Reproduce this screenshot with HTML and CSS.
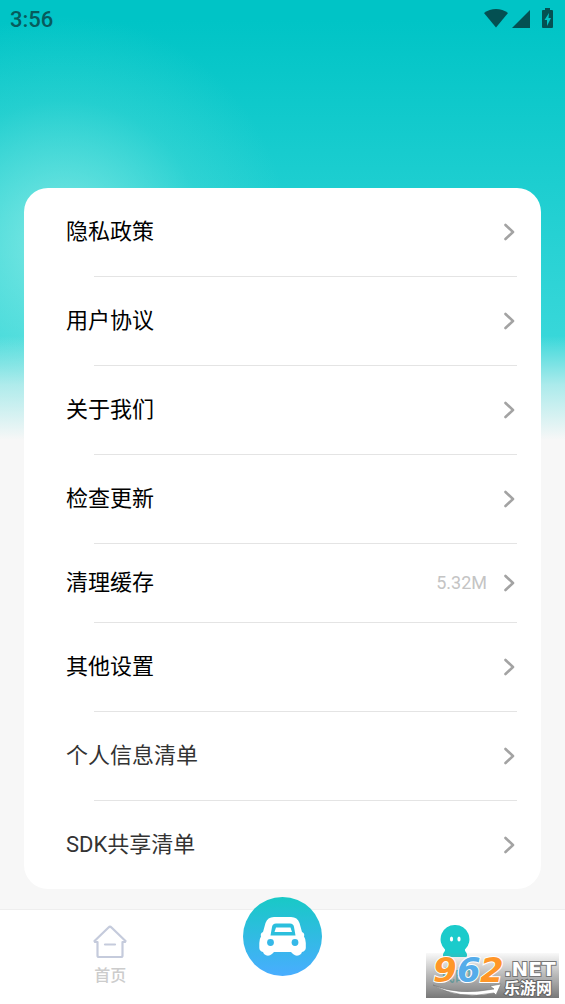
FILE: index.html
```
<!DOCTYPE html>
<html lang="zh-CN">
<head>
<meta charset="utf-8">
<meta name="viewport" content="width=device-width, initial-scale=1">
<title>我的</title>
<link rel="stylesheet" href="styles.css">
</head>
<body>
<svg class="sprite" aria-hidden="true">
  <symbol id="chevron" viewBox="0 0 12 18"><path d="M2.500 2L10 9L2.500 16" fill="none" stroke="currentColor" stroke-width="2.600" stroke-linecap="round" stroke-linejoin="round"/></symbol>
</svg>
<header class="status">
  <time class="clock">3:56</time>
  <svg class="status-icons" width="72" height="22" viewBox="0 0 72 22" aria-hidden="true">
    <path d="M1 6C8 0.500 18 0.500 25 6L13 20.500Z"/>
    <path d="M47 3V21H29Z"/>
    <path fill-rule="evenodd" d="M60 3h2V1h5v2h2q1 0 1 1v16q0 1-1 1h-9q-1 0-1-1V4q0-1 1-1ZM66 6L61.500 13H64v6L68 11h-2.500Z"/>
  </svg>
</header>
<main class="content">
  <div class="card">
    <button class="row"><span class="label">隐私政策</span><svg class="arrow"><use href="#chevron"/></svg></button>
    <button class="row"><span class="label">用户协议</span><svg class="arrow"><use href="#chevron"/></svg></button>
    <button class="row"><span class="label">关于我们</span><svg class="arrow"><use href="#chevron"/></svg></button>
    <button class="row"><span class="label">检查更新</span><svg class="arrow"><use href="#chevron"/></svg></button>
    <button class="row row-short"><span class="label">清理缓存</span><span class="value">5.32M</span><svg class="arrow"><use href="#chevron"/></svg></button>
    <button class="row"><span class="label">其他设置</span><svg class="arrow"><use href="#chevron"/></svg></button>
    <button class="row row-soft"><span class="label">个人信息清单</span><svg class="arrow"><use href="#chevron"/></svg></button>
    <button class="row row-soft"><span class="label">SDK共享清单</span><svg class="arrow"><use href="#chevron"/></svg></button>
  </div>
</main>
<nav class="tabs">
  <a class="tab" href="#home">
    <svg width="34" height="34" viewBox="0 0 34 34" fill="none" stroke="#c5cbdc" stroke-width="2.200" stroke-linecap="round" stroke-linejoin="round" aria-hidden="true">
      <path d="M4.500 17H2L1.500 16L15.500 2.500Q17 1 18.500 2.500L32.500 16L32 17H29.500V30.500Q29.500 32 28 32H6Q4.500 32 4.500 30.500Z"/><path d="M12 19.500H22"/>
    </svg>
    <span>首页</span>
  </a>
  <a class="tab tab-car" href="#car" aria-label="车辆">
    <svg width="79" height="79" viewBox="0 0 79 79" aria-hidden="true">
      <defs><linearGradient id="blue" x1="0" y1="0" x2="0" y2="1"><stop offset="0" stop-color="#18c9c6"/><stop offset="1" stop-color="#49adff"/></linearGradient></defs>
      <circle cx="39.500" cy="39.500" r="39.500" fill="url(#blue)"/>
      <path fill="#fff" d="M31 20H48Q54.500 20 56.500 26L59 35Q62 36 61 39.500Q62.800 42 62.800 46V51Q62.500 54 59 55L58 57Q54 60.500 50 57L48 55H31L29 57Q25 60.500 21 57L20 55Q16.500 54 16.300 51V46Q16.300 42 18 39.500Q17 36 20 35L22.500 26Q24.500 20 31 20Z"/>
      <path fill="#2bbfdd" fill-rule="evenodd" d="M33 26.500H47Q50.500 26.500 51 30L52.500 38.500H27.500L29 30Q29.500 26.500 33 26.500ZM33 30.500L31.500 35H49L47.500 30.500Z"/>
      <circle cx="27.500" cy="45.500" r="3.400" fill="#35b8e8"/><circle cx="52" cy="45.500" r="3.400" fill="#35b8e8"/>
    </svg>
  </a>
  <a class="tab tab-active" href="#mine">
    <svg width="34" height="34" viewBox="0 0 34 34" aria-hidden="true">
      <path fill="#1bcbcb" d="M17 0A14.200 14.200 0 0 1 27 24.500Q26.500 26 28.500 28Q30 32 27.500 32H6.500Q4 32 5.500 28Q7.500 26 7 24.500A14.200 14.200 0 0 1 17 0Z"/>
      <ellipse cx="13.500" cy="14" rx="1.600" ry="2.500" fill="#fff"/><ellipse cx="21" cy="14" rx="1.600" ry="2.500" fill="#fff"/>
    </svg>
    <span>我的</span>
  </a>
</nav>
<svg class="watermark" width="133" height="45" viewBox="0 0 133 45" role="img" aria-label="962.NET 乐游网">
  <defs>
    <linearGradient id="shade" x1="0" y1="0" x2="0" y2="1"><stop offset="0" stop-color="#888" stop-opacity="0.050"/><stop offset="0.500" stop-color="#888" stop-opacity="0.600"/><stop offset="1" stop-color="#777"/></linearGradient>
  </defs>
  <rect width="133" height="45" fill="url(#shade)"/>
  <path d="M7 32Q32 43 68 36L64 33L75 31L70 42L68 40Q32 47 7 32Z" fill="#fff" stroke="#777" stroke-width="0.600"/>
  <g class="mark-number"><text x="7" y="29" fill="#ff9628">9</text><text x="31" y="29" fill="#55acea">6</text><text x="54" y="29" fill="#ff9628">2</text></g>
  <text class="mark-net" x="78" y="23">.NET</text>
  <text class="mark-name" x="78" y="41">乐游网</text>
</svg>
</body>
</html>
```
FILE: styles.css
```
* { box-sizing: border-box; }
body {
  margin: 0;
  min-height: 100vh;
  display: flex;
  flex-direction: column;
  font-family: Roboto, "Noto Sans CJK SC", sans-serif;
  background:
    linear-gradient(to bottom, rgba(247,247,247,0) 336px, rgba(247,247,247,0.600) 385px, #f7f7f7 440px),
    radial-gradient(circle at 64px 240px, rgba(150,238,232,0.800) 0, rgba(140,236,230,0.500) 70px, rgba(110,228,222,0.220) 140px, rgba(60,215,210,0) 225px),
    linear-gradient(to bottom, #00c4c6 0, #00c4c6 20px, #3ad8da 350px, #3ad8da 100%);
}
.sprite { position: absolute; width: 0; height: 0; }
.status {
  height: 40px;
  display: flex;
  justify-content: space-between;
  align-items: center;
  padding: 0 10px;
  color: #075b5c;
}
.clock { font-size: 22px; line-height: 40px; font-weight: 500; }
.status-icons { fill: #045052; margin-bottom: 4px; }
.content { flex: 1; padding: 148px 24px 20px; }
.card { background: #fff; border-radius: 24px; overflow: hidden; }
.row {
  width: 100%;
  height: 89px;
  display: flex;
  align-items: center;
  border: 0;
  padding: 0 26px 2px 42px;
  background: linear-gradient(#e4e4e4, #e4e4e4) 70px 100% / calc(100% - 94px) 1px no-repeat;
  font: 22px/32px Roboto, "Noto Sans CJK SC", sans-serif;
  color: #000;
  text-align: left;
  cursor: pointer;
}
.row-short { height: 79px; }
.row-soft { color: #333; }
.row:last-child { height: 88px; padding-bottom: 0; background: none; }
.label { flex: 1; }
.value { font-size: 18px; color: #c4c4c4; margin-right: 16px; }
.arrow { width: 12px; height: 18px; color: #a3a3a3; }
.tabs {
  height: 95px;
  display: grid;
  grid-template-columns: 39% 22% 39%;
  background: #fff;
  border-top: 1px solid #eee;
}
.tab {
  display: flex;
  flex-direction: column;
  align-items: center;
  gap: 5px;
  padding-top: 15px;
  font-size: 16px;
  line-height: 24px;
  font-weight: 500;
  color: #ccc;
  text-decoration: none;
}
.tab-car { padding: 0; margin-top: -13px; }
.tab-active { color: #1bcbcb; }
.watermark { position: absolute; right: 6px; top: 953px; overflow: visible; }
.mark-number { font: italic bold 34px "DejaVu Sans", sans-serif; stroke: #fff; stroke-width: 2px; paint-order: stroke; }
.mark-net { font: bold 20px "DejaVu Sans", sans-serif; fill: #fff; stroke: #777; stroke-width: 2px; paint-order: stroke; }
.mark-name { font: bold 16px "Noto Sans CJK SC", sans-serif; fill: #fff; stroke: #666; stroke-width: 2px; paint-order: stroke; }
```
